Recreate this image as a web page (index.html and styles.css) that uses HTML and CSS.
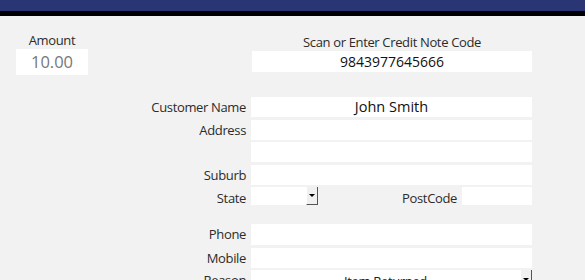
FILE: index.html
```html
<!DOCTYPE html>
<html lang="en">

<head>
	<meta charset="UTF-8" />
	<meta name="viewport" content="width=device-width, initial-scale=1.0" />
	<title>Credit Note Refund</title>
	<link rel="stylesheet" href="styles.css">
</head>

<body>
	<div class="topbar"></div>

	<div class="page">
		<div class="top-row">
			<div class="amount">
				<div class="caption">Amount</div>
				<div class="box amount-box">10.00</div>
			</div>
			<div class="code">
				<div class="caption">Scan or Enter Credit Note Code</div>
				<div class="box code-box">9843977645666</div>
			</div>
		</div>

		<div class="form group-customer">
			<label class="label">Customer Name</label>
			<div class="box field name-field">John Smith</div>

			<label class="label">Address</label>
			<div class="box field"></div>

			<label class="label"></label>
			<div class="box field"></div>

			<label class="label">Suburb</label>
			<div class="box field"></div>

			<label class="label state-label">State</label>
			<div class="state-row">
				<div class="combo state-combo">
					<div class="combo-text"></div>
					<div class="combo-btn"><span class="arrow"></span></div>
				</div>
				<label class="label post-label">PostCode</label>
				<div class="box post-box"></div>
			</div>
		</div>

		<div class="form group-contact">
			<label class="label">Phone</label>
			<div class="box field tall"></div>

			<label class="label">Mobile</label>
			<div class="box field"></div>

			<label class="label">Reason</label>
			<div class="combo reason-combo">
				<div class="combo-text">Item Returned</div>
				<div class="combo-btn"><span class="arrow"></span></div>
			</div>
		</div>
	</div>
</body>

</html>
```

FILE: styles.css
```css
body {
	margin: 0;
	background-color: #f2f2f2;
	font-family: "Open Sans", "Noto Sans", sans-serif;
	font-size: 13px;
	letter-spacing: -0.35px;
	color: #2b2b2b;
	overflow: hidden;
}

.topbar {
	height: 11px;
	background-color: #2a3673;
	border-bottom: 5px solid #000;
}

.box {
	background-color: #fff;
}

/* top amount + code */
.top-row {
	display: flex;
	gap: 164px;
	padding-left: 16px;
	margin-top: 15px;
}

.caption {
	text-align: center;
	line-height: 18px;
}

.amount {
	width: 72px;
}

.amount-box {
	height: 26px;
	line-height: 26px;
	text-align: center;
	font-size: 16.5px;
	letter-spacing: 0;
	color: #777;
}

.code {
	width: 280px;
	margin-top: 2px;
}

.code-box {
	height: 21px;
	line-height: 21px;
	text-align: center;
	font-size: 14px;
	letter-spacing: 0;
	color: #111;
}

/* form rows */
.form {
	display: grid;
	grid-template-columns: 246px 281px;
	column-gap: 5px;
	row-gap: 2.5px;
	grid-auto-rows: 20px;
}

.group-customer {
	margin-top: 22px;
}

.group-contact {
	margin-top: 17px;
	grid-template-rows: 21px 20px 20px;
	row-gap: 2.5px;
}

.label {
	text-align: right;
	line-height: 20px;
}

.name-field {
	text-align: center;
	line-height: 20px;
	font-size: 14.5px;
	letter-spacing: 0;
	color: #111;
}

.state-label {
	line-height: 22px;
}

.state-row {
	display: flex;
	height: 18px;
}

.post-label {
	flex: 1;
	line-height: 22px;
	padding-right: 5px;
}

.post-box {
	width: 70px;
}

/* combo boxes */
.combo {
	display: flex;
	background-color: #fff;
}

.state-combo {
	width: 67px;
}

.combo-text {
	flex: 1;
	text-align: center;
	line-height: 22px;
	color: #222;
	font-size: 13px;
}

.combo-btn {
	width: 10px;
	background-color: #f0f0f0;
	border-right: 1px solid #555;
	border-bottom: 1px solid #555;
	border-left: 1px solid #fff;
	display: flex;
	align-items: center;
	justify-content: center;
}

.arrow {
	width: 0;
	height: 0;
	border-left: 3px solid transparent;
	border-right: 3px solid transparent;
	border-top: 3px solid #000;
}

.reason-combo .combo-btn {
	align-items: flex-start;
	padding-top: 8px;
}
```
